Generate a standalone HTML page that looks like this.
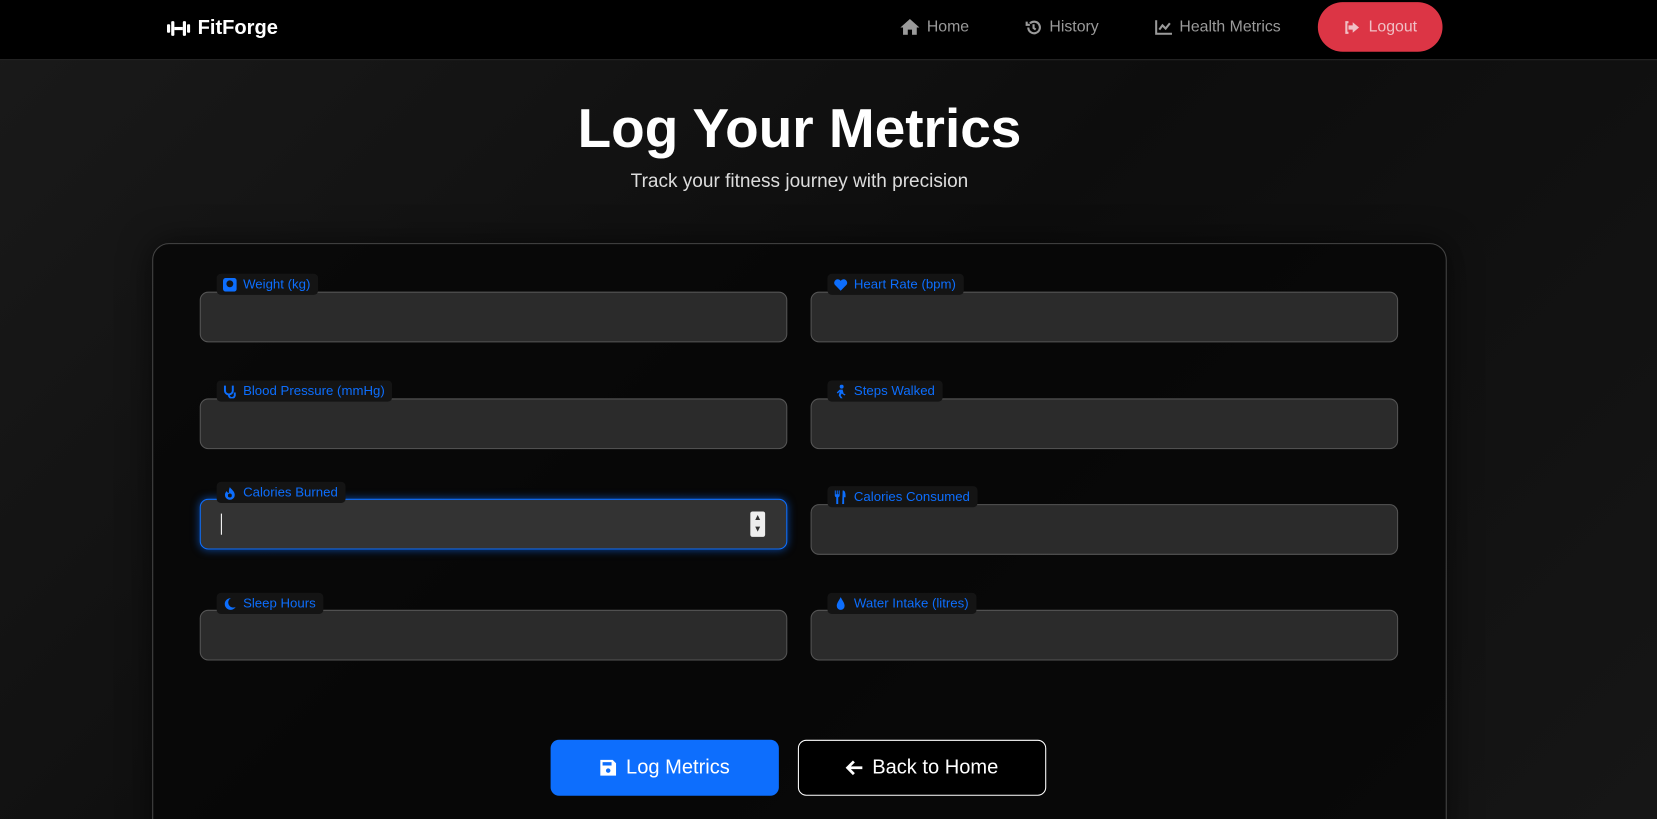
<!DOCTYPE html>
<html><head><meta charset="utf-8"><style>
*{box-sizing:border-box;margin:0;padding:0}
html,body{width:1657px;height:819px;overflow:hidden}
body{background:linear-gradient(135deg,#1a1a1a 0%,#0d0d0d 50%,#161616 100%);font-family:"Liberation Sans",sans-serif;color:#fff;position:relative}
#w{position:absolute;left:0;top:0;width:1568px;height:775px;transform:scale(1.0568);transform-origin:0 0;overflow:hidden}
.nav{position:absolute;left:0;top:0;width:1568px;height:57px;background:#000;border-bottom:1px solid #2a2a2a}
.brand{position:absolute;left:158px;top:16px;font-weight:bold;font-size:19px;display:flex;align-items:center;gap:7px}
.nl{position:absolute;top:17px;font-size:15px;color:#9a9a9a;display:flex;align-items:center;gap:7px}
.logout{position:absolute;left:1247px;top:2px;width:118px;height:47px;background:#dc3545;border-radius:24px;color:#f0c0c5;font-size:15px;display:flex;align-items:center;justify-content:center;gap:8px}
h1{position:absolute;top:92px;left:0;width:1513px;text-align:center;font-size:52px;font-weight:bold}
.sub{position:absolute;top:161px;left:0;width:1513px;text-align:center;font-size:18px;color:#ddd}
.card{position:absolute;left:144px;top:230px;width:1225px;height:620px;border:1px solid #444;border-radius:16px;background:rgba(5,5,5,.75);box-shadow:0 0 30px rgba(0,0,0,.6)}
.in{position:absolute;width:556px;height:48px;background:#2b2b2b;border:1px solid #555;border-radius:8px}
.in.f{background:#333;border-color:#0d6efd;box-shadow:0 0 8px rgba(13,110,253,.6)}
.lb{position:absolute;background:#141414;border-radius:4px;color:#0d6efd;font-size:12.5px;padding:2px 7px 2px 6px;display:flex;align-items:center;gap:6px;height:20px}
.lb svg{width:13px;height:13px;fill:#0d6efd}
.btn{position:absolute;top:700px;height:53px;border-radius:8px;font-size:19px;display:flex;align-items:center;justify-content:center;gap:8px}
</style></head><body><div id="w">
<div class="nav">
 <div class="brand"><svg width="22" height="16" viewBox="0 0 22 16" fill="#fff"><rect x="0" y="4" width="3" height="8" rx="1"/><rect x="4" y="1" width="3" height="14" rx="1"/><rect x="7" y="6.5" width="8" height="3"/><rect x="15" y="1" width="3" height="14" rx="1"/><rect x="19" y="4" width="3" height="8" rx="1"/></svg>FitForge</div>
 <div class="nl" style="left:852px"><svg width="18" height="15" viewBox="0 0 18 15" fill="#9a9a9a"><path d="M9 0L0 8h2.5v7h4.5v-5h4v5h4.5V8H18z"/></svg>Home</div>
 <div class="nl" style="left:970px"><svg width="16" height="16" viewBox="0 0 16 16" fill="none" stroke="#9a9a9a" stroke-width="2"><path d="M3 8a5.5 5.5 0 1 0 1.6-3.9M1.5 2.5v3h3M8 5v3.5l2 1.5"/></svg>History</div>
 <div class="nl" style="left:1093px"><svg width="16" height="14" viewBox="0 0 16 14" fill="none" stroke="#9a9a9a" stroke-width="2"><path d="M1 0v13h15M4 9l3-4 3 3 4-5"/></svg>Health Metrics</div>
 <div class="logout"><svg width="16" height="14" viewBox="0 0 16 14" fill="#f0c0c5"><path d="M5 1H2v12h3v-2H4V3h1zM9 2l6 5-6 5V9H5V5h4z"/></svg>Logout</div>
</div>
<h1>Log Your Metrics</h1>
<div class="sub">Track your fitness journey with precision</div>
<div class="card"></div>
<div class="in" style="left:189px;top:276px"></div>
<div class="in" style="left:767px;top:276px"></div>
<div class="in" style="left:189px;top:377px"></div>
<div class="in" style="left:767px;top:377px"></div>
<div class="in f" style="left:189px;top:472px"><div style="position:absolute;left:19px;top:13px;width:1px;height:20px;background:#fff"></div><div style="position:absolute;left:520px;top:11px;width:14px;height:24px;background:#eee;border-radius:2px;color:#333;font-size:8px;text-align:center;line-height:11px">▲<br>▼</div></div>
<div class="in" style="left:767px;top:477px"></div>
<div class="in" style="left:189px;top:577px"></div>
<div class="in" style="left:767px;top:577px"></div>
<div class="lb" style="left:205px;top:259px"><svg viewBox="0 0 14 14"><rect x="0" y="0" width="14" height="14" rx="3"/><circle cx="7" cy="6" r="3.5" fill="#141414"/></svg>Weight (kg)</div>
<div class="lb" style="left:783px;top:259px"><svg viewBox="0 0 14 14"><path d="M7 13L1 7a3.5 3.5 0 0 1 6-4 3.5 3.5 0 0 1 6 4z"/></svg>Heart Rate (bpm)</div>
<div class="lb" style="left:205px;top:360px"><svg viewBox="0 0 14 14" fill="none" stroke="#0d6efd" stroke-width="2" style="fill:none"><path d="M2 1v5a4 4 0 0 0 8 0V1M6 10v1a3 3 0 0 0 6-1V8"/></svg>Blood Pressure (mmHg)</div>
<div class="lb" style="left:783px;top:360px"><svg viewBox="0 0 14 14"><circle cx="8" cy="2" r="2"/><path d="M6 5h3l1 4 2 1-1 1-3-2-1 2 2 3H7l-2-3 1-4-2 2-1-1z"/></svg>Steps Walked</div>
<div class="lb" style="left:205px;top:456px"><svg viewBox="0 0 14 14"><path d="M7 1c1 2 5 4 5 8a5 5 0 0 1-10 0c0-2 1-3 2-4 0 1 1 2 2 2 0-2 0-4 1-6z"/><circle cx="7" cy="9.5" r="2" fill="#141414"/></svg>Calories Burned</div>
<div class="lb" style="left:783px;top:460px"><svg viewBox="0 0 14 14"><path d="M1 0h1v4h1V0h1v4h1V0h1v5a2 2 0 0 1-1.5 2V14h-2V7A2 2 0 0 1 1 5zM9 0c3 0 3 4 3 7h-1.5v7h-2z"/></svg>Calories Consumed</div>
<div class="lb" style="left:205px;top:561px"><svg viewBox="0 0 14 14"><path d="M8 1a6 6 0 1 0 5 9A5 5 0 0 1 8 1z"/></svg>Sleep Hours</div>
<div class="lb" style="left:783px;top:561px"><svg viewBox="0 0 14 14"><path d="M7 0C5 4 3 6 3 9a4 4 0 0 0 8 0c0-3-2-5-4-9z"/></svg>Water Intake (litres)</div>
<div class="btn" style="left:521px;width:216px;background:#0d6efd"><svg width="17" height="17" viewBox="0 0 16 16" fill="#fff"><path d="M1 1h11l3 3v11H1z"/><rect x="3" y="3" width="8" height="3" fill="#0d6efd"/><circle cx="8" cy="10.5" r="2" fill="#0d6efd"/></svg>Log Metrics</div>
<div class="btn" style="left:755px;width:235px;border:1px solid #fff;background:#000"><svg width="17" height="15" viewBox="0 0 17 15" fill="none" stroke="#fff" stroke-width="2.6"><path d="M16 7.5H3M8 1.5l-6 6 6 6"/></svg>Back to Home</div>
</div></body></html>
